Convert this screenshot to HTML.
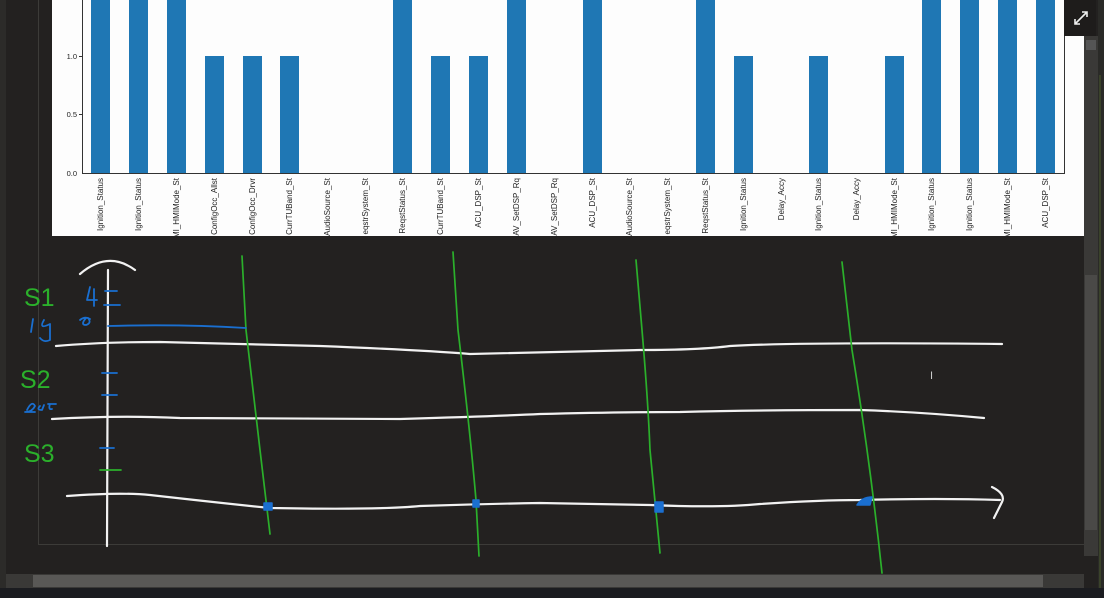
<!DOCTYPE html>
<html><head><style>
html,body{margin:0;padding:0;background:#232120;width:1104px;height:598px;overflow:hidden}
svg{display:block}
text{font-family:"Liberation Sans",sans-serif}
</style></head><body>
<svg width="1104" height="598" viewBox="0 0 1104 598" xmlns="http://www.w3.org/2000/svg">
<rect width="1104" height="598" fill="#232120"/>
<rect x="0" y="0" width="6" height="588" fill="#2c2b29"/>
<line x1="38.5" y1="0" x2="38.5" y2="545" stroke="#3c3b38"/>
<line x1="38" y1="544.5" x2="1084" y2="544.5" stroke="#3c3b38"/>
<rect x="52" y="0" width="1032" height="236" fill="#fdfdfd"/>
<g fill="#1f77b4">
<rect x="91" y="0" width="19" height="173"/>
<rect x="129" y="0" width="19" height="173"/>
<rect x="167" y="0" width="19" height="173"/>
<rect x="205" y="56" width="19" height="117"/>
<rect x="243" y="56" width="19" height="117"/>
<rect x="280" y="56" width="19" height="117"/>
<rect x="393" y="0" width="19" height="173"/>
<rect x="431" y="56" width="19" height="117"/>
<rect x="469" y="56" width="19" height="117"/>
<rect x="507" y="0" width="19" height="173"/>
<rect x="583" y="0" width="19" height="173"/>
<rect x="696" y="0" width="19" height="173"/>
<rect x="734" y="56" width="19" height="117"/>
<rect x="809" y="56" width="19" height="117"/>
<rect x="885" y="56" width="19" height="117"/>
<rect x="922" y="0" width="19" height="173"/>
<rect x="960" y="0" width="19" height="173"/>
<rect x="998" y="0" width="19" height="173"/>
<rect x="1036" y="0" width="19" height="173"/>
</g>
<g stroke="#333" fill="none">
<line x1="82.5" y1="0" x2="82.5" y2="173"/>
<line x1="82" y1="173.5" x2="1065" y2="173.5"/>
<line x1="1064.5" y1="0" x2="1064.5" y2="173"/>
<line x1="79" y1="56.5" x2="82" y2="56.5"/>
<line x1="79" y1="114.5" x2="82" y2="114.5"/>
</g>
<g font-size="7.5" fill="#222" text-anchor="end">
<text x="77" y="59">1.0</text><text x="77" y="117">0.5</text><text x="77" y="176">0.0</text>
</g>
<g font-size="8" fill="#222" text-anchor="end">
<text transform="translate(103,178) rotate(-90)">Ignition_Status</text>
<text transform="translate(141,178) rotate(-90)">Ignition_Status</text>
<text transform="translate(179,178) rotate(-90)">MI_HMIMode_St</text>
<text transform="translate(217,178) rotate(-90)">ConfigOcc_Allst</text>
<text transform="translate(255,178) rotate(-90)">ConfigOcc_Drvr</text>
<text transform="translate(292,178) rotate(-90)">CurrTUBand_St</text>
<text transform="translate(330,178) rotate(-90)">AudioSource_St</text>
<text transform="translate(368,178) rotate(-90)">eqstrSystem_St</text>
<text transform="translate(405,178) rotate(-90)">ReqstStatus_St</text>
<text transform="translate(443,178) rotate(-90)">CurrTUBand_St</text>
<text transform="translate(481,178) rotate(-90)">ACU_DSP_St</text>
<text transform="translate(519,178) rotate(-90)">IAV_SetDSP_Rq</text>
<text transform="translate(557,178) rotate(-90)">IAV_SetDSP_Rq</text>
<text transform="translate(595,178) rotate(-90)">ACU_DSP_St</text>
<text transform="translate(632,178) rotate(-90)">AudioSource_St</text>
<text transform="translate(670,178) rotate(-90)">eqstrSystem_St</text>
<text transform="translate(708,178) rotate(-90)">ReqstStatus_St</text>
<text transform="translate(746,178) rotate(-90)">Ignition_Status</text>
<text transform="translate(784,178) rotate(-90)">Delay_Accy</text>
<text transform="translate(821,178) rotate(-90)">Ignition_Status</text>
<text transform="translate(859,178) rotate(-90)">Delay_Accy</text>
<text transform="translate(897,178) rotate(-90)">MI_HMIMode_St</text>
<text transform="translate(934,178) rotate(-90)">Ignition_Status</text>
<text transform="translate(972,178) rotate(-90)">Ignition_Status</text>
<text transform="translate(1010,178) rotate(-90)">MI_HMIMode_St</text>
<text transform="translate(1048,178) rotate(-90)">ACU_DSP_St</text>
</g>
<rect x="1064" y="0" width="32" height="36" fill="#1e1c1b"/>
<path d="M1075 24 L1087 12 M1082 12 H1087 V17 M1075 19 V24 H1080" stroke="#eee" stroke-width="1.6" fill="none"/>
<rect x="1084" y="36" width="14" height="520" fill="#3a3937"/>
<rect x="1086" y="40" width="10" height="10" fill="#555"/>
<rect x="1085" y="275" width="12" height="255" fill="#4a4947"/>
<rect x="1098" y="0" width="6" height="588" fill="#2a2a27"/>
<line x1="1100" y1="75" x2="1100" y2="588" stroke="#4b5a2e"/>
<rect x="6" y="574" width="1078" height="14" fill="#3a3937"/>
<rect x="33" y="575" width="1010" height="12" fill="#595856"/>
<rect x="0" y="588" width="1104" height="10" fill="#1b1c20"/>
<g fill="none" stroke-linecap="round" stroke-linejoin="round">
<g stroke="#f2f2f2" stroke-width="2.2">
<path d="M107 546 L108 270"/>
<path d="M80 274 Q108 250 135 270"/>
<path d="M56 346 Q100 342 160 342 Q240 344 320 346 Q420 350 470 354 Q560 352 640 350 Q700 350 730 346 Q800 342 1002 344"/>
<path d="M52 419 Q120 415 180 418 Q300 419 400 419 Q500 416 540 414 Q620 412 680 412 Q760 410 860 410 Q920 412 984 418"/>
<path d="M67 496 Q120 492 150 495 Q230 504 270 508 Q380 510 420 506 Q480 504 540 503 Q600 504 650 505 Q720 508 760 504 Q820 500 860 500 Q940 498 1000 500"/>
<path d="M992 487 Q1006 494 1002 502 L994 518"/>
</g>
<g stroke="#2bb02b" stroke-width="1.7">
<path d="M242 256 L246 330 Q254 400 260 450 L270 534"/>
<path d="M453 252 L458 330 Q470 430 476 500 L479 556"/>
<path d="M636 260 L642 330 Q648 400 650 450 L660 553"/>
<path d="M842 262 L852 350 Q870 460 882 573"/>
<path d="M100 470 H121"/>
</g>
<g stroke="#1a6fd0" stroke-width="1.8">
<path d="M108 326 Q180 324 246 328"/>
<path d="M105 291 H117 M104 305 H120 M102 373 H117 M102 395 H117 M100 448 H114"/>
<path d="M90 287 L87 300 H97 M94 289 V306"/>
<path d="M33 319 L31 332 M44 320 Q38 330 50 324 L50 340 Q44 343 40 338"/>
<path d="M80 320 Q85 316 90 319 M86 318 Q80 325 86 325 Q92 323 88 318"/>
<path d="M27 410 Q32 400 35 406 Q32 412 25 412 H35 M40 406 Q36 410 42 410 L44 405 M48 404 H56 M50 404 Q48 410 52 409"/>
</g>
<g fill="#1a6fd0" stroke="#1a6fd0" stroke-width="1.5">
<rect x="264" y="503" width="8" height="7"/>
<rect x="473" y="500" width="6" height="7"/>
<rect x="655" y="502" width="8" height="10"/>
<path d="M857 505 Q862 497 872 497 L870 505 Z"/>
</g>
</g>
<g fill="#2bb02b" font-size="25" font-family="Liberation Sans,sans-serif">
<text x="24" y="306">S1</text>
<text x="20" y="388">S2</text>
<text x="24" y="462">S3</text>
</g>
<text x="930" y="379" fill="#ccc" font-size="11">I</text>
</svg>
</body></html>
